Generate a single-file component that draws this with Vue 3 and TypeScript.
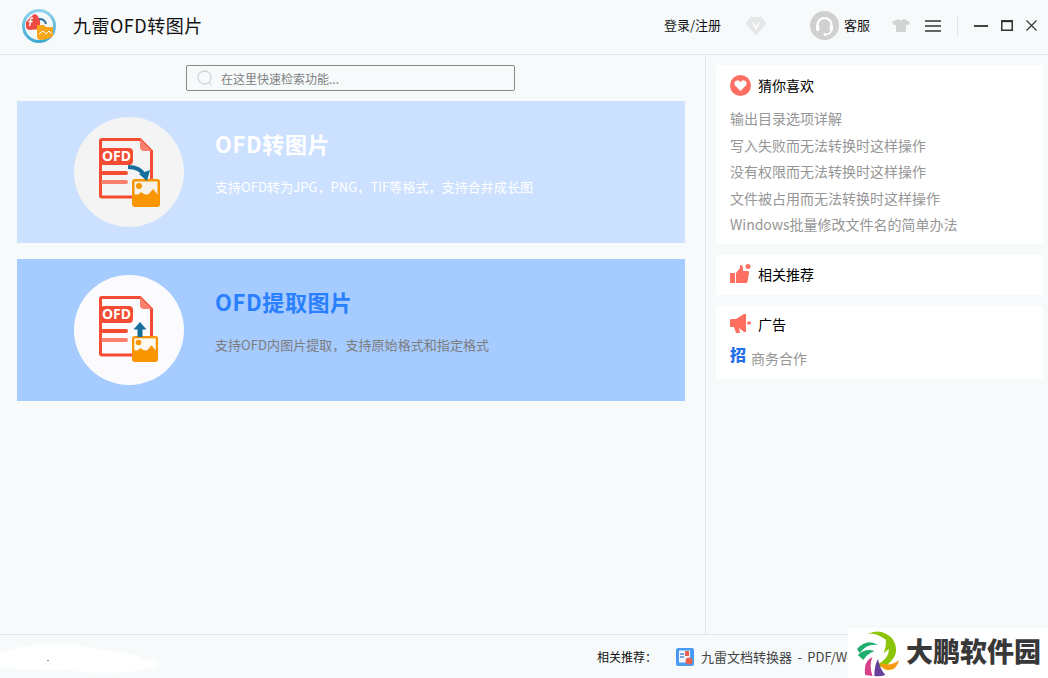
<script setup lang="ts">
interface Feature {
	id: string;
	title: string;
	desc: string;
	tone: string;
	paper: string;
	picture: string;
}

const features: Feature[] = [
	{
		id: "convert",
		title: "OFD转图片",
		desc: "支持OFD转为JPG，PNG，TIF等格式，支持合并成长图",
		tone: "light",
		paper: "#f6f2ea",
		picture: "translate(58 62)",
	},
	{
		id: "extract",
		title: "OFD提取图片",
		desc: "支持OFD内图片提取，支持原始格式和指定格式",
		tone: "strong",
		paper: "#fdfaf2",
		picture: "translate(58 61) scale(0.93)",
	},
];

const guesses = [
	"输出目录选项详解",
	"写入失败而无法转换时这样操作",
	"没有权限而无法转换时这样操作",
	"文件被占用而无法转换时这样操作",
	"Windows批量修改文件名的简单办法",
];
</script>

<template>
	<div class="app">
		<header class="top">
			<svg class="logo" width="34" height="34" viewBox="0 0 34 34">
				<defs>
					<linearGradient id="ring" x1="0" y1="0" x2="0" y2="1">
						<stop offset="0" stop-color="#8fd2ec" />
						<stop offset="1" stop-color="#3fa9d2" />
					</linearGradient>
				</defs>
				<circle cx="17" cy="17" r="15.5" fill="#f4f8fa" stroke="url(#ring)" stroke-width="3" />
				<path d="M4 13 L12 5 L15 6 L18 11 V20 L8 21 Q4 21 4 17 Z" fill="#ee4a44" />
				<path d="M11 9 Q8 9 8.5 13 L7.5 17 M6.5 12.5 H10.5" fill="none" stroke="#fff" stroke-width="1.3" />
				<path d="M15 16 H22 L24 18 H31 V27 Q26 31 18 31 Q15 30 15 27 Z" fill="#f9a51a" />
				<path d="M17 25 L21 22 L24 25 L27 22 L30 25" fill="none" stroke="#fff" stroke-width="1" />
				<path d="M17 10 Q23 10 24 15" fill="none" stroke="#2b6f9c" stroke-width="2" />
			</svg>
			<div class="app-name">九雷OFD转图片</div>
			<div class="login">登录/注册</div>
			<svg class="diamond" width="22" height="20" viewBox="0 0 22 20">
				<path d="M5.5 1 H16.5 L21.5 7.5 L11 19.5 L0.5 7.5 Z" fill="#e4e6e8" />
				<path d="M8 6.5 L11 12.5 L14 6.5" fill="none" stroke="#fff" stroke-width="1.6" />
			</svg>
			<svg class="agent" width="29" height="29" viewBox="0 0 29 29">
				<circle cx="14.5" cy="14.5" r="14.5" fill="#d0d0d0" />
				<path d="M7.5 17 V14 a7 7 0 0 1 14 0 V17" fill="none" stroke="#fff" stroke-width="2.2" />
				<rect x="6" y="14" width="3.4" height="6" rx="1.5" fill="#fff" />
				<rect x="19.6" y="14" width="3.4" height="6" rx="1.5" fill="#fff" />
				<path d="M21 20 Q20 23.5 15.5 23.5" fill="none" stroke="#fff" stroke-width="1.6" />
				<circle cx="15" cy="23.5" r="1.5" fill="#fff" />
			</svg>
			<div class="service">客服</div>
			<svg class="shirt" width="18" height="13" viewBox="0 0 18 13">
				<path d="M6 0 Q9 2.5 12 0 L18 3 L16 6.5 L14 5.5 V13 H4 V5.5 L2 6.5 L0 3 Z" fill="#d2d4d4" />
			</svg>
			<svg class="menu" width="16" height="12" viewBox="0 0 16 12">
				<path d="M0 1 H16 M0 6 H16 M0 11 H16" stroke="#333" stroke-width="1.3" />
			</svg>
			<span class="divider"></span>
			<svg class="win-min" width="14" height="2" viewBox="0 0 14 2">
				<rect width="14" height="2" fill="#444" />
			</svg>
			<svg class="win-max" width="12" height="11" viewBox="0 0 12 11">
				<path d="M0.75 1 H11.25 V10.25 H0.75 Z" fill="none" stroke="#333" stroke-width="1.5" />
				<rect x="0" y="0" width="12" height="2.2" fill="#333" />
			</svg>
			<svg class="win-close" width="11" height="11" viewBox="0 0 11 11">
				<path d="M0.5 0.5 L10.5 10.5 M10.5 0.5 L0.5 10.5" stroke="#333" stroke-width="1.1" />
			</svg>
		</header>

		<main class="main">
			<section class="left">
				<div class="search">
					<svg width="16" height="16" viewBox="0 0 16 16">
						<circle cx="7.5" cy="7.5" r="6.5" fill="none" stroke="#d2d4d6" stroke-width="1.3" />
						<path d="M12 12.5 L14.5 15" stroke="#d2d4d6" stroke-width="1.3" />
					</svg>
					<span>在这里快速检索功能...</span>
				</div>

				<div v-for="item in features" :key="item.id" class="feature" :class="item.tone">
					<div class="bubble">
						<svg width="110" height="110" viewBox="0 0 110 110">
							<path
								d="M28 22.5 H66 L77.5 34 V80 H28 Q26.5 80 26.5 78.5 V24 Q26.5 22.5 28 22.5 Z"
								fill="none"
								stroke="#f44c32"
								stroke-width="3"
							/>
							<path d="M66 22 L78 34 H70 Q66 34 66 30 Z" fill="#f8806c" />
							<rect x="26" y="31" width="33" height="17" rx="4" fill="#f44c32" />
							<text x="42.5" y="44" class="ofd-mark">OFD</text>
							<rect x="27" y="54" width="27" height="4" rx="2" fill="#f44c32" />
							<rect x="27" y="63" width="27" height="4" rx="2" fill="#f8806c" />
							<g :transform="item.picture">
								<rect width="28" height="28" rx="3" fill="#f99500" />
								<rect x="2.5" y="2.5" width="23" height="13" :fill="item.paper" />
								<path d="M2 20 L9 13 L15 17 L21 10 L26 16 V20 Z" fill="#f99500" />
								<path d="M2 16 H26 V18 H2 Z" fill="#f99500" />
								<circle cx="7" cy="7" r="3" fill="#f99500" />
							</g>
							<path
								v-if="item.id === 'convert'"
								d="M54 50 Q66 50 70 58"
								fill="none"
								stroke="#146f9c"
								stroke-width="4"
							/>
							<path v-if="item.id === 'convert'" d="M65 57 L76 53 L73 64 Z" fill="#146f9c" />
							<path v-else d="M66 47 L72.5 54.5 H68.5 V62 H63.5 V54.5 H59.5 Z" fill="#146f9c" />
						</svg>
					</div>
					<div class="feature-text">
						<h2>{{ item.title }}</h2>
						<p>{{ item.desc }}</p>
					</div>
				</div>
			</section>

			<aside class="side">
				<div class="panel guess">
					<div class="panel-head">
						<svg width="21" height="21" viewBox="0 0 21 21">
							<circle cx="10.5" cy="10.5" r="10.5" fill="#ff6f61" />
							<path d="M10.5 16 L4.8 10.2 a3.2 3.2 0 0 1 5.7 -3 a3.2 3.2 0 0 1 5.7 3 Z" fill="#fff" />
						</svg>
						<span>猜你喜欢</span>
					</div>
					<a v-for="g in guesses" :key="g" class="guess-link">{{ g }}</a>
				</div>

				<div class="panel related">
					<div class="panel-head">
						<svg width="21" height="20" viewBox="0 0 21 20">
							<rect x="0" y="9" width="5" height="10" fill="#ff6f61" />
							<path d="M6 9 L10 4 V1 Q13 1 13 4 V7 H18 Q19.5 7 19 9 L17.5 18 Q17 19 16 19 H6 Z" fill="#ff6f61" />
							<circle cx="18" cy="2.5" r="2.5" fill="#ff6f61" />
						</svg>
						<span>相关推荐</span>
					</div>
				</div>

				<div class="panel ad">
					<div class="panel-head">
						<svg width="21" height="20" viewBox="0 0 21 20">
							<path d="M0 6 Q0 5 1 5 H6 L14 0 H16 V18 H14 L9 14 L10 19 H6 L4 13 H1 Q0 13 0 12 Z" fill="#ff6f61" />
							<rect x="17" y="7.5" width="4" height="3" rx="1.5" fill="#ff6f61" />
						</svg>
						<span>广告</span>
					</div>
					<div class="biz">
						<b>招</b>
						<span>商务合作</span>
					</div>
				</div>
			</aside>
		</main>

		<footer class="foot">
			<span class="foot-label">相关推荐：</span>
			<svg class="foot-icon" width="18" height="18" viewBox="0 0 18 18">
				<rect width="18" height="18" rx="2" fill="#4a9cf0" />
				<rect x="3" y="2.5" width="11" height="12" fill="#f2f7fd" />
				<rect x="4" y="5" width="4" height="2" fill="#7ba8dc" />
				<rect x="4" y="8" width="4" height="2" fill="#7ba8dc" />
				<rect x="9" y="3" width="4" height="5" fill="#e6604c" />
				<circle cx="13" cy="13" r="3.5" fill="#e6604c" />
			</svg>
			<span class="foot-text">九雷文档转换器 - PDF/Word</span>
		</footer>

		<svg class="blot" width="165" height="36" viewBox="0 0 165 36">
			<g class="blot-shape">
				<ellipse cx="55" cy="11" rx="42" ry="7" fill="#fff" />
				<ellipse cx="60" cy="17" rx="80" ry="8" fill="#fff" />
				<ellipse cx="50" cy="24" rx="56" ry="6" fill="#fff" />
				<ellipse cx="110" cy="24" rx="50" ry="7" fill="#fff" />
				<ellipse cx="105" cy="30" rx="32" ry="3" fill="#fff" />
			</g>
			<rect x="47" y="20" width="2" height="1" fill="#8a8a8a" />
		</svg>

		<div class="stamp">
			<svg width="44" height="48" viewBox="0 0 48 48" preserveAspectRatio="none">
				<path d="M12 5 Q28 -2 40 10 Q50 24 34 36 Q28 40 22 36 Q36 30 36 20 L30 24 Q36 12 28 8 Q20 3 12 5 Z" fill="#8cc408" />
				<circle cx="30" cy="12" r="2.6" fill="#fff" />
				<path d="M1 20 Q12 9 24 16 Q12 14 4 24 Z" fill="#1fae70" />
				<path d="M2 26 Q10 19 20 22 Q12 25 8 31 Z" fill="#1fae70" />
				<path d="M10 46 Q8 32 18 28 Q14 36 18 47 Z" fill="#d8408c" />
				<path d="M20 47 Q20 36 24 30 Q26 40 32 46 Q26 48 20 47 Z" fill="#6a3f9c" />
				<path d="M26 34 Q38 38 47 31 Q44 42 34 41 Q28 40 26 34 Z" fill="#f59a0c" />
			</svg>
			<span>大鹏软件园</span>
		</div>
	</div>
</template>

<style scoped>
.app {
	position: relative;
	display: flex;
	flex-direction: column;
	width: 1048px;
	height: 678px;
	overflow: hidden;
	background: #f6fafb;
	color: #111;
	font-family: "Noto Sans CJK SC", "Noto Sans", sans-serif;
}

.top {
	display: flex;
	align-items: center;
	flex-shrink: 0;
	height: 51px;
	padding-left: 22px;
	padding-bottom: 3px;
	border-bottom: 1px solid #e4e6e8;
	box-sizing: content-box;
}
.app-name {
	margin-left: 17px;
	margin-bottom: 1px;
	font-size: 18px;
	line-height: 1;
	letter-spacing: 0.5px;
}
.login {
	margin-left: auto;
	margin-bottom: 3px;
	font-size: 13px;
}
.diamond {
	margin-left: 24px;
}
.agent {
	margin-left: 43px;
}
.service {
	margin-left: 5px;
	margin-bottom: 3px;
	font-size: 13px;
}
.shirt {
	margin-left: 22px;
}
.menu {
	margin-left: 15px;
}
.divider {
	width: 1px;
	height: 20px;
	margin-left: 16px;
	background: #e0e2e4;
}
.win-min {
	margin-left: 16px;
}
.win-max {
	margin-left: 13px;
}
.win-close {
	margin-left: 13px;
	margin-right: 11px;
}

.main {
	display: flex;
	flex: 1;
	min-height: 0;
}
.left {
	display: flex;
	flex-direction: column;
	gap: 16px;
	width: 706px;
	flex-shrink: 0;
	padding: 10px 20px 0 17px;
	box-sizing: border-box;
	border-right: 1px solid #e4e6e8;
}
.search {
	display: flex;
	align-items: center;
	gap: 8px;
	flex-shrink: 0;
	width: 329px;
	height: 26px;
	margin-left: 169px;
	margin-bottom: -6px;
	padding-left: 10px;
	box-sizing: border-box;
	border: 1px solid #8a8a8a;
	border-radius: 2px;
	font-size: 12px;
	color: #808080;
}
.feature {
	display: flex;
	align-items: center;
	width: 668px;
	height: 142px;
	flex-shrink: 0;
	padding-left: 57px;
	box-sizing: border-box;
}
.feature.light {
	background: #cce0ff;
}
.feature.strong {
	background: #a6cbff;
}
.bubble {
	width: 110px;
	height: 110px;
	border-radius: 50%;
}
.bubble svg {
	display: block;
}
.light .bubble {
	background: #f4f4f4;
}
.strong .bubble {
	background: #fbfbfd;
}
.ofd-mark {
	font: 700 14px "Noto Sans", sans-serif;
	fill: #fff;
	text-anchor: middle;
}
.feature-text {
	margin-left: 31px;
	padding-bottom: 20px;
}
.feature-text h2 {
	margin: 0;
	font-size: 22px;
	font-weight: 700;
	line-height: 30px;
	letter-spacing: 0.6px;
}
.feature-text p {
	margin: 20px 0 0;
	font-size: 13px;
	line-height: 18px;
	letter-spacing: 0.06px;
}
.light h2,
.light p {
	color: #fff;
}
.strong h2 {
	color: #2a7fff;
}
.strong p {
	color: #7d7d7d;
}

.side {
	display: flex;
	flex-direction: column;
	gap: 11px;
	flex: 1;
	padding: 10px 5px 0 10px;
}
.panel {
	padding: 10px 14px;
	background: #fff;
}
.panel-head {
	display: flex;
	align-items: center;
	gap: 7px;
	height: 20px;
	font-size: 14px;
	color: #000;
}
.guess {
	height: 179px;
	box-sizing: border-box;
}
.guess .panel-head {
	margin-bottom: 10px;
}
.guess-link {
	display: block;
	font-size: 14px;
	line-height: 26.6px;
	color: #969696;
}
.related {
	height: 40px;
	padding-top: 9px;
	box-sizing: border-box;
}
.ad {
	height: 73px;
	padding-top: 8px;
	box-sizing: border-box;
}
.biz {
	display: flex;
	align-items: flex-start;
	gap: 5px;
	margin-top: 11px;
	font-size: 14px;
	color: #969696;
}
.biz b {
	font-size: 16px;
	line-height: 18px;
	font-weight: 900;
	color: #2470e8;
}
.biz span {
	margin-top: 3px;
	line-height: 20px;
}

.foot {
	display: flex;
	align-items: center;
	flex-shrink: 0;
	height: 44px;
	padding-left: 597px;
	box-sizing: border-box;
	border-top: 1px solid #e4e6e8;
	white-space: nowrap;
}
.foot-label {
	font-size: 12px;
}
.foot-icon {
	margin-left: 19px;
}
.foot-text {
	margin-left: 7px;
	font-size: 13px;
	word-spacing: 2.5px;
	color: #444;
}

.blot {
	position: absolute;
	left: 0;
	top: 640px;
}
.blot-shape {
	filter: blur(1px);
}
.stamp {
	position: absolute;
	left: 848px;
	top: 628px;
	display: flex;
	align-items: center;
	gap: 6px;
	width: 200px;
	height: 50px;
	padding-left: 8px;
	box-sizing: border-box;
	background: #fff;
	font-size: 27px;
	font-weight: 900;
	color: #383838;
	white-space: nowrap;
}
.stamp span {
	margin-bottom: 5px;
}
</style>
